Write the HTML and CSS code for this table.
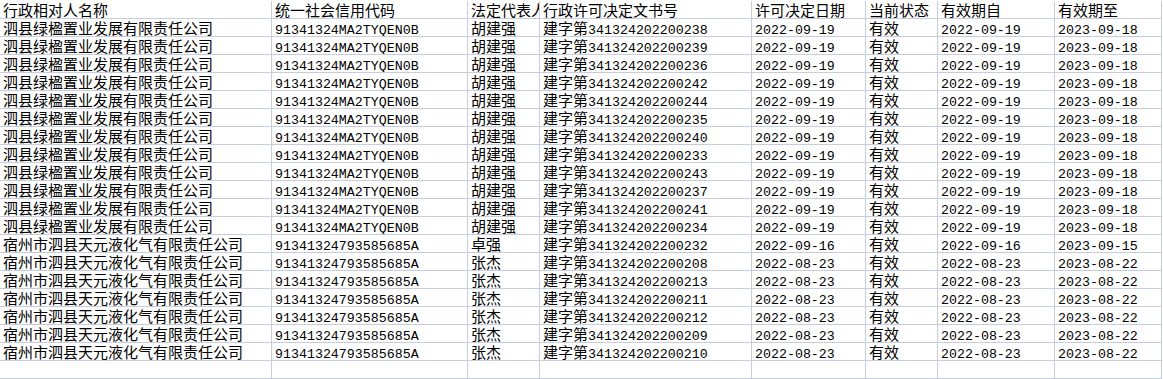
FILE: index.html
```html
<!DOCTYPE html>
<html lang="zh-CN">
<head>
<meta charset="utf-8">
<title>行政许可</title>
<link rel="stylesheet" href="styles.css">
</head>
<body>
<div class="sheet">
<div class="c">行政相对人名称</div><div class="c">统一社会信用代码</div><div class="c">法定代表人</div><div class="c">行政许可决定文书号</div><div class="c">许可决定日期</div><div class="c">当前状态</div><div class="c">有效期自</div><div class="c">有效期至</div>

<div class="c">泗县绿楹置业发展有限责任公司</div><div class="c"><span class="n">91341324MA2TYQEN0B</span></div><div class="c">胡建强</div><div class="c">建字第<span class="n">341324202200238</span></div><div class="c"><span class="n">2022-09-19</span></div><div class="c">有效</div><div class="c"><span class="n">2022-09-19</span></div><div class="c"><span class="n">2023-09-18</span></div>
<div class="c">泗县绿楹置业发展有限责任公司</div><div class="c"><span class="n">91341324MA2TYQEN0B</span></div><div class="c">胡建强</div><div class="c">建字第<span class="n">341324202200239</span></div><div class="c"><span class="n">2022-09-19</span></div><div class="c">有效</div><div class="c"><span class="n">2022-09-19</span></div><div class="c"><span class="n">2023-09-18</span></div>
<div class="c">泗县绿楹置业发展有限责任公司</div><div class="c"><span class="n">91341324MA2TYQEN0B</span></div><div class="c">胡建强</div><div class="c">建字第<span class="n">341324202200236</span></div><div class="c"><span class="n">2022-09-19</span></div><div class="c">有效</div><div class="c"><span class="n">2022-09-19</span></div><div class="c"><span class="n">2023-09-18</span></div>
<div class="c">泗县绿楹置业发展有限责任公司</div><div class="c"><span class="n">91341324MA2TYQEN0B</span></div><div class="c">胡建强</div><div class="c">建字第<span class="n">341324202200242</span></div><div class="c"><span class="n">2022-09-19</span></div><div class="c">有效</div><div class="c"><span class="n">2022-09-19</span></div><div class="c"><span class="n">2023-09-18</span></div>
<div class="c">泗县绿楹置业发展有限责任公司</div><div class="c"><span class="n">91341324MA2TYQEN0B</span></div><div class="c">胡建强</div><div class="c">建字第<span class="n">341324202200244</span></div><div class="c"><span class="n">2022-09-19</span></div><div class="c">有效</div><div class="c"><span class="n">2022-09-19</span></div><div class="c"><span class="n">2023-09-18</span></div>
<div class="c">泗县绿楹置业发展有限责任公司</div><div class="c"><span class="n">91341324MA2TYQEN0B</span></div><div class="c">胡建强</div><div class="c">建字第<span class="n">341324202200235</span></div><div class="c"><span class="n">2022-09-19</span></div><div class="c">有效</div><div class="c"><span class="n">2022-09-19</span></div><div class="c"><span class="n">2023-09-18</span></div>
<div class="c">泗县绿楹置业发展有限责任公司</div><div class="c"><span class="n">91341324MA2TYQEN0B</span></div><div class="c">胡建强</div><div class="c">建字第<span class="n">341324202200240</span></div><div class="c"><span class="n">2022-09-19</span></div><div class="c">有效</div><div class="c"><span class="n">2022-09-19</span></div><div class="c"><span class="n">2023-09-18</span></div>
<div class="c">泗县绿楹置业发展有限责任公司</div><div class="c"><span class="n">91341324MA2TYQEN0B</span></div><div class="c">胡建强</div><div class="c">建字第<span class="n">341324202200233</span></div><div class="c"><span class="n">2022-09-19</span></div><div class="c">有效</div><div class="c"><span class="n">2022-09-19</span></div><div class="c"><span class="n">2023-09-18</span></div>
<div class="c">泗县绿楹置业发展有限责任公司</div><div class="c"><span class="n">91341324MA2TYQEN0B</span></div><div class="c">胡建强</div><div class="c">建字第<span class="n">341324202200243</span></div><div class="c"><span class="n">2022-09-19</span></div><div class="c">有效</div><div class="c"><span class="n">2022-09-19</span></div><div class="c"><span class="n">2023-09-18</span></div>
<div class="c">泗县绿楹置业发展有限责任公司</div><div class="c"><span class="n">91341324MA2TYQEN0B</span></div><div class="c">胡建强</div><div class="c">建字第<span class="n">341324202200237</span></div><div class="c"><span class="n">2022-09-19</span></div><div class="c">有效</div><div class="c"><span class="n">2022-09-19</span></div><div class="c"><span class="n">2023-09-18</span></div>
<div class="c">泗县绿楹置业发展有限责任公司</div><div class="c"><span class="n">91341324MA2TYQEN0B</span></div><div class="c">胡建强</div><div class="c">建字第<span class="n">341324202200241</span></div><div class="c"><span class="n">2022-09-19</span></div><div class="c">有效</div><div class="c"><span class="n">2022-09-19</span></div><div class="c"><span class="n">2023-09-18</span></div>
<div class="c">泗县绿楹置业发展有限责任公司</div><div class="c"><span class="n">91341324MA2TYQEN0B</span></div><div class="c">胡建强</div><div class="c">建字第<span class="n">341324202200234</span></div><div class="c"><span class="n">2022-09-19</span></div><div class="c">有效</div><div class="c"><span class="n">2022-09-19</span></div><div class="c"><span class="n">2023-09-18</span></div>
<div class="c">宿州市泗县天元液化气有限责任公司</div><div class="c"><span class="n">91341324793585685A</span></div><div class="c">卓强</div><div class="c">建字第<span class="n">341324202200232</span></div><div class="c"><span class="n">2022-09-16</span></div><div class="c">有效</div><div class="c"><span class="n">2022-09-16</span></div><div class="c"><span class="n">2023-09-15</span></div>
<div class="c">宿州市泗县天元液化气有限责任公司</div><div class="c"><span class="n">91341324793585685A</span></div><div class="c">张杰</div><div class="c">建字第<span class="n">341324202200208</span></div><div class="c"><span class="n">2022-08-23</span></div><div class="c">有效</div><div class="c"><span class="n">2022-08-23</span></div><div class="c"><span class="n">2023-08-22</span></div>
<div class="c">宿州市泗县天元液化气有限责任公司</div><div class="c"><span class="n">91341324793585685A</span></div><div class="c">张杰</div><div class="c">建字第<span class="n">341324202200213</span></div><div class="c"><span class="n">2022-08-23</span></div><div class="c">有效</div><div class="c"><span class="n">2022-08-23</span></div><div class="c"><span class="n">2023-08-22</span></div>
<div class="c">宿州市泗县天元液化气有限责任公司</div><div class="c"><span class="n">91341324793585685A</span></div><div class="c">张杰</div><div class="c">建字第<span class="n">341324202200211</span></div><div class="c"><span class="n">2022-08-23</span></div><div class="c">有效</div><div class="c"><span class="n">2022-08-23</span></div><div class="c"><span class="n">2023-08-22</span></div>
<div class="c">宿州市泗县天元液化气有限责任公司</div><div class="c"><span class="n">91341324793585685A</span></div><div class="c">张杰</div><div class="c">建字第<span class="n">341324202200212</span></div><div class="c"><span class="n">2022-08-23</span></div><div class="c">有效</div><div class="c"><span class="n">2022-08-23</span></div><div class="c"><span class="n">2023-08-22</span></div>
<div class="c">宿州市泗县天元液化气有限责任公司</div><div class="c"><span class="n">91341324793585685A</span></div><div class="c">张杰</div><div class="c">建字第<span class="n">341324202200209</span></div><div class="c"><span class="n">2022-08-23</span></div><div class="c">有效</div><div class="c"><span class="n">2022-08-23</span></div><div class="c"><span class="n">2023-08-22</span></div>
<div class="c">宿州市泗县天元液化气有限责任公司</div><div class="c"><span class="n">91341324793585685A</span></div><div class="c">张杰</div><div class="c">建字第<span class="n">341324202200210</span></div><div class="c"><span class="n">2022-08-23</span></div><div class="c">有效</div><div class="c"><span class="n">2022-08-23</span></div><div class="c"><span class="n">2023-08-22</span></div>

<div class="c"></div><div class="c"></div><div class="c"></div><div class="c"></div><div class="c"></div><div class="c"></div><div class="c"></div><div class="c"></div>
</div>
</body>
</html>
```

FILE: styles.css
```css
html, body {
  margin: 0;
  padding: 0;
  background: #ffffff;
}

.sheet {
  display: grid;
  grid-template-columns: 272px 196px 72px 212px 114px 72px 117px 107px;
  grid-auto-rows: 18px;
  width: 1162px;
  padding-top: 1px;
  font-family: "Noto Sans CJK SC", "Noto Sans", sans-serif;
  font-size: 15px;
  color: #000000;
}

.c {
  box-sizing: border-box;
  border-right: 1px solid #c6cde2;
  border-bottom: 1px solid #c6cde2;
  padding-left: 3px;
  line-height: 17px;
  height: 18px;
  white-space: nowrap;
  overflow: hidden;
}

.n {
  font-family: "Liberation Mono", "DejaVu Sans Mono", monospace;
  font-size: 13.3px;
}
```
